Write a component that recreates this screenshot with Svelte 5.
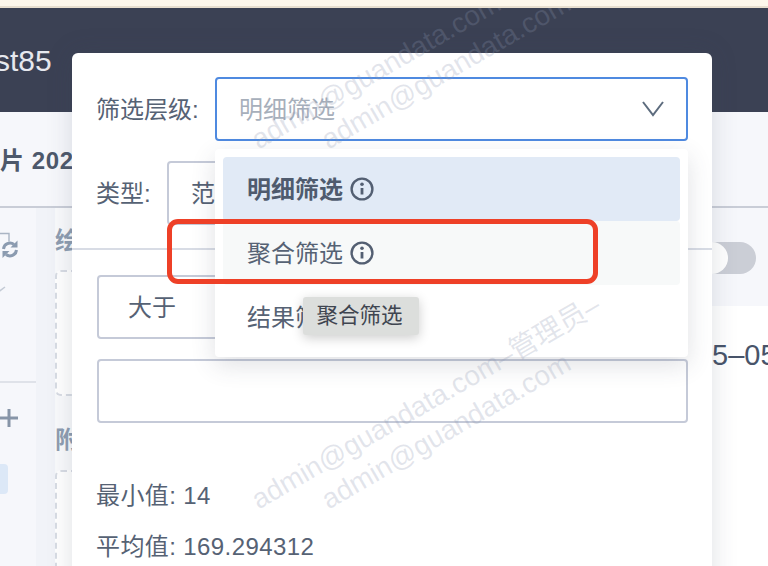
<script>
  const options = [
    { label: '明细筛选', cls: 'selected', info: true },
    { label: '聚合筛选', cls: 'hover', info: true },
    { label: '结果筛选', cls: '', info: false }
  ];
  const marks = [
    { text: 'admin@guandata.com–管理员–', x: 261, y: 514 },
    { text: 'admin@guandata.com', x: 331, y: 514 },
    { text: 'admin@guandata.com–管理员–', x: 261, y: 154 },
    { text: 'admin@guandata.com', x: 331, y: 154 }
  ];
</script>

<div class="page">
  <div class="notice"></div>
  <header class="top"><span class="title">st85</span></header>
  <div class="sub"><span class="sub-title">片 2024</span></div>
  <div class="body">
    <aside class="rail">
      <svg class="refresh" viewBox="0 0 18 26" width="18" height="26" fill="none" stroke="#8b9bb0" stroke-width="3">
        <path d="M-2 1.500h11v8" stroke-width="1.400" stroke="#aab5c4"/>
        <path d="M3.500 17a6.500 6.500 0 0 1 10.500-4.500"/>
        <path d="M17.500 8.500v7h-7z" fill="#8b9bb0" stroke="none"/>
        <path d="M16.500 18a6.500 6.500 0 0 1-10.500 4.500"/>
        <path d="M2.500 26v-7h7z" fill="#8b9bb0" stroke="none"/>
      </svg>
      <svg class="chev" viewBox="0 0 6 6" width="6" height="6" fill="none" stroke="#c3cad5" stroke-width="1.500"><path d="M-1 5.500 5 1"/></svg>
      <div class="rail-line"></div>
      <svg class="plus" viewBox="0 0 18 18" width="18" height="18" stroke="#8795a8" stroke-width="3"><path d="M0 9h18M9 0v18"/></svg>
      <div class="chip"></div>
    </aside>
    <div class="gutter"></div>
    <section class="fields">
      <div class="field-title">绘</div>
      <div class="drop first"></div>
      <div class="field-title second">附</div>
      <div class="drop"></div>
    </section>
    <main class="content">
      <div class="band">
        <div class="toggle"><span class="knob"></span></div>
      </div>
      <div class="date">5–05</div>
    </main>
  </div>

  <div class="modal">
    <div class="row">
      <span class="label wide">筛选层级:</span>
      <div class="select focus">
        <span class="placeholder">明细筛选</span>
        <svg viewBox="0 0 22 16" width="22" height="16" fill="none" stroke="#5d6c7e" stroke-width="2"><path d="M1 1l10 13L21 1"/></svg>
      </div>
    </div>
    <div class="row type">
      <span class="label narrow">类型:</span>
      <div class="select">范</div>
    </div>
    <div class="divider"></div>
    <div class="select small">大于</div>
    <div class="select input"></div>
    <p class="stat first-stat">最小值: 14</p>
    <p class="stat">平均值: 169.294312</p>

    <div class="menu">
      {#each options as o}
        <div class="option {o.cls}">
          <span>{o.label}</span>
          {#if o.info}
            <svg viewBox="0 0 24 24" width="24" height="24" fill="none" stroke="#535f72" stroke-width="2.400">
              <circle cx="12" cy="12" r="10.400"/>
              <path d="M12 11v6.500" stroke-width="2.800"/>
              <circle cx="12" cy="7.200" r="1.800" fill="#535f72" stroke="none"/>
            </svg>
          {/if}
        </div>
      {/each}
    </div>
    <div class="tip">聚合筛选</div>
  </div>

  <div class="marks">
    {#each marks as m}
      <span class="mark" style="left:{m.x}px;top:{m.y}px">{m.text}</span>
    {/each}
  </div>
  <div class="red"></div>
</div>

<style>
  :global(body) { margin: 0; }
  .page {
    position: relative;
    width: 768px;
    height: 566px;
    overflow: hidden;
    background: #fff;
    display: flex;
    flex-direction: column;
    font-family: "Liberation Sans", "Noto Sans CJK SC", sans-serif;
    color: #566274;
  }
  .notice { height: 6px; background: #fdf7ec; border-bottom: 2px solid #e8dfd0; flex: none; }
  .top { height: 104px; background: #3b4154; flex: none; display: flex; align-items: center; }
  .title { font-size: 30px; color: #e6e8ee; margin-left: -5px; line-height: 1; padding-top: 1px; }
  .sub { height: 96px; background: #f6f7fb; border-bottom: 2px solid #c9cdd7; box-sizing: border-box; flex: none; display: flex; align-items: center; padding-bottom: 2px; }
  .sub-title { font-size: 24px; font-weight: 700; color: #4d586b; letter-spacing: .6px; }
  .body { flex: 1; display: flex; min-height: 0; }
  .rail { width: 36px; flex: none; background: #f6f7fb; position: relative; display: flex; flex-direction: column; }
  .refresh { margin-top: 24px; flex: none; }
  .chev { margin-top: 28px; flex: none; }
  .rail-line { height: 2px; background: #dfe2e9; margin-top: 89px; flex: none; }
  .plus { margin-top: 26px; flex: none; }
  .chip { width: 8px; height: 30px; background: #dce8f7; border-radius: 0 4px 4px 0; margin-top: 37px; flex: none; }
  .gutter { width: 19px; flex: none; background: #f1f3f8; }
  .fields { width: 217px; flex: none; background: #f9fafc; display: flex; flex-direction: column; }
  .field-title { font-size: 24px; font-weight: 700; color: #8e9db1; margin-top: 19px; line-height: 28px; white-space: nowrap; }
  .field-title.second { margin-top: 30px; }
  .drop { height: 126px; margin-top: 16px; border: 2px dashed #d8dce4; border-radius: 6px; box-sizing: border-box; background: #fff; flex: none; }
  .drop.first { margin-top: 15px; }
  .content { flex: 1; display: flex; flex-direction: column; background: #fff; }
  .band { height: 98px; background: #f6f7fb; flex: none; position: relative; }
  .toggle { position: absolute; left: 408px; top: 34px; width: 76px; height: 32px; border-radius: 16px; background: #cbced6; }
  .knob { position: absolute; left: 16px; top: 0; width: 32px; height: 32px; border-radius: 50%; background: #fff; }
  .date { font-size: 29px; color: #48546a; margin-top: 33px; padding-left: 440px; line-height: 32px; white-space: nowrap; }

  .modal {
    position: absolute;
    left: 72px;
    top: 53px;
    width: 640px;
    height: 560px;
    box-sizing: border-box;
    padding: 24px 24px 0 25px;
    background: #fff;
    border-radius: 6px 6px 0 0;
    box-shadow: 0 0 26px rgba(60, 70, 90, .17);
    font-size: 24px;
  }
  .row { display: flex; align-items: center; }
  .row.type { margin-top: 20px; }
  .label { flex: none; white-space: nowrap; padding-bottom: 4px; margin-left: -1px; }
  .wide { width: 119px; }
  .narrow { width: 71px; }
  .select {
    flex: 1;
    height: 64px;
    box-sizing: border-box;
    border: 2px solid #c5cad8;
    border-radius: 4px;
    display: flex;
    align-items: center;
    padding: 0 22px 4px;
    background: #fff;
  }
  .focus { border-color: #4f8ae0; justify-content: space-between; }
  .focus svg { margin-top: 4px; }
  .placeholder { color: #a7afbb; }
  .divider { height: 2px; background: #d8dce5; margin: 23px -24px 25px -25px; }
  .small { width: 300px; padding-left: 29px; }
  .input { margin-top: 20px; }
  .stat { margin: 0 0 0 -1px; line-height: 51px; letter-spacing: .4px; color: #566274; white-space: nowrap; }
  .first-stat { margin-top: 47px; }

  .menu {
    position: absolute;
    left: 143px;
    top: 96px;
    width: 473px;
    height: 208px;
    box-sizing: border-box;
    padding: 8px;
    background: #fff;
    border-radius: 4px;
    box-shadow: 0 8px 24px rgba(60, 70, 90, .16);
  }
  .option { height: 64px; display: flex; align-items: center; gap: 7px; padding: 0 24px 4px; border-radius: 4px; box-sizing: border-box; }
  .option svg { margin-top: 4px; }
  .selected { background: #e1eaf6; font-weight: 700; color: #4f5b6e; }
  .hover { background: #f7f9f9; }
  .tip {
    position: absolute;
    left: 231px;
    top: 244px;
    width: 116px;
    height: 38px;
    box-sizing: border-box;
    padding-right: 3px;
    background: #dcdedc;
    border-radius: 3px;
    box-shadow: 0 3px 12px rgba(0, 0, 0, .2);
    font-size: 21.500px;
    line-height: 38px;
    text-align: center;
    color: #3f4550;
    white-space: nowrap;
  }

  .marks { position: absolute; inset: 8px 0 0 0; overflow: hidden; pointer-events: none; }
  .mark {
    position: absolute;
    margin-top: -8px;
    font-size: 28px;
    line-height: 1;
    color: rgba(140, 150, 175, .25);
    white-space: nowrap;
    transform-origin: 0 100%;
    transform: translateY(-28px) rotate(-30deg);
  }
  .red {
    position: absolute;
    left: 167px;
    top: 219px;
    width: 431px;
    height: 65px;
    box-sizing: border-box;
    border: 5px solid #ee4027;
    border-radius: 11px;
    pointer-events: none;
  }
</style>
